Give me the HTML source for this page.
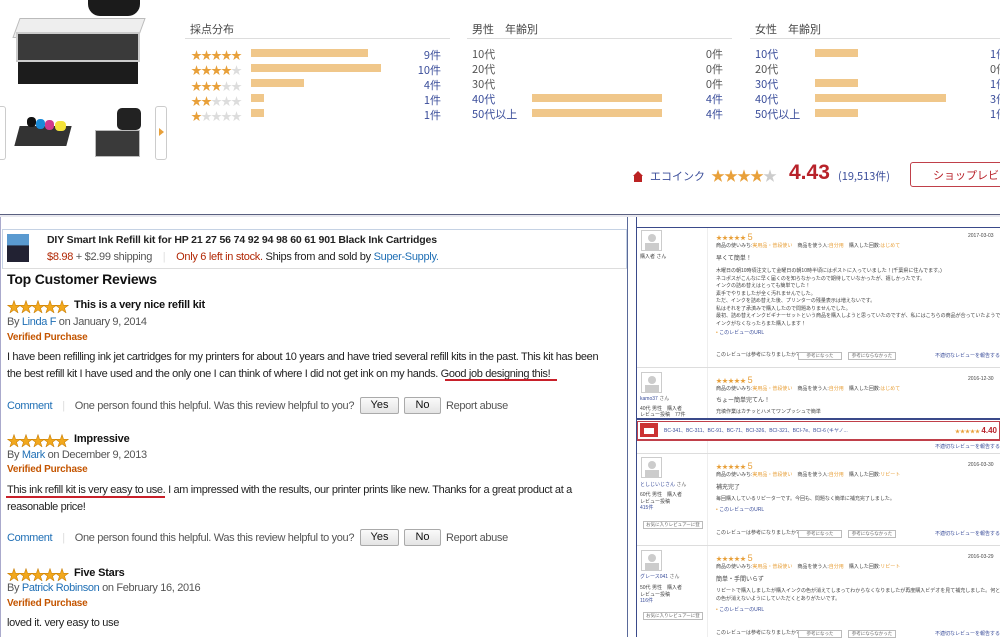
<!DOCTYPE html>
<html><head><meta charset="utf-8">
<style>
*{margin:0;padding:0;box-sizing:border-box}
body{width:1000px;height:637px;overflow:hidden;background:#fff;position:relative;font-family:"Liberation Sans","Noto Sans CJK JP",sans-serif;color:#333}
.a{position:absolute;white-space:nowrap}
.jp{font-family:"Noto Sans CJK JP",sans-serif}
.bar{position:absolute;height:8px;background:#f0c78a}
.cnt{position:absolute;font-size:11px;color:#3a4d9a;text-align:right;width:40px}
.st{position:absolute;font-size:11px;letter-spacing:-1px;color:#e8a03a}
.st i{font-style:normal;color:#ddd}
.amz{position:absolute;font-size:14px;color:#f2a81d;letter-spacing:-2px;-webkit-text-stroke:.5px #c57a00}
.t11{font-size:11px;color:#222;letter-spacing:-0.35px}
.bl{color:#1f6fb5}
.vp{font-size:10px;font-weight:bold;color:#c45500;letter-spacing:-0.2px}
.btn{position:absolute;height:17px;border:1px solid #aaa;border-radius:2px;background:linear-gradient(#fafafa,#e4e4e4);font-size:11px;text-align:center;line-height:15px;color:#111}
.rt{position:absolute;font-size:5px;color:#444;line-height:7.5px;white-space:nowrap}
.av{position:absolute;width:21px;height:21px;border:1px solid #ccc;background:#fff}
.av:before{content:"";position:absolute;left:6px;top:3px;width:8px;height:8px;border-radius:50%;background:#ccc}
.av:after{content:"";position:absolute;left:3px;top:12px;width:14px;height:7px;background:#ccc}
.sb{position:absolute;height:8px;border:1px solid #bbb;font-size:4.5px;text-align:center;line-height:6px;color:#666;overflow:hidden}
</style></head><body>

<!-- top product images -->
<div class="a" style="left:88px;top:0;width:52px;height:16px;background:#1b1b1b;border-radius:0 0 12px 12px"></div>
<div class="a" style="left:16px;top:18px;width:126px;height:20px;border:1px solid #bbb;background:#eee;transform:skewX(-20deg)"></div>
<div class="a" style="left:16px;top:32px;width:124px;height:30px;background:#3a3a3a;border:2px solid #ccc"></div>
<div class="a" style="left:18px;top:62px;width:120px;height:22px;background:#1c1c1c"></div>
<div class="a" style="left:0;top:106px;width:6px;height:54px;border:1px solid #ccc;border-left:none;border-radius:0 3px 3px 0"></div>
<div class="a" style="left:155px;top:106px;width:12px;height:54px;border:1px solid #ccc;border-radius:3px"></div>
<div class="a" style="left:159px;top:128px;width:0;height:0;border-left:5px solid #e8a03a;border-top:4px solid transparent;border-bottom:4px solid transparent"></div>
<div class="a" style="left:17px;top:126px;width:52px;height:20px;background:#333;transform:skewX(-15deg)"></div>
<div class="a" style="left:27px;top:117px;width:9px;height:10px;background:#111;border-radius:4px"></div>
<div class="a" style="left:36px;top:119px;width:9px;height:10px;background:#1a8ad8;border-radius:4px"></div>
<div class="a" style="left:45px;top:120px;width:9px;height:10px;background:#d03a8c;border-radius:4px"></div>
<div class="a" style="left:55px;top:121px;width:11px;height:10px;background:#f4e23a;border-radius:4px"></div>
<div class="a" style="left:117px;top:108px;width:24px;height:22px;background:#222;border-radius:5px"></div>
<div class="a" style="left:95px;top:130px;width:45px;height:27px;background:#3a3a3a;border:1px solid #bbb"></div>

<!-- rating distribution -->
<div class="a jp" style="left:190px;top:21px;font-size:11px;color:#444">採点分布</div>
<div class="a" style="left:185px;top:38px;width:265px;height:1px;background:#ddd"></div>
<div class="st" style="left:191px;top:47px">★★★★★</div>
<div class="st" style="left:191px;top:62px">★★★★<i>★</i></div>
<div class="st" style="left:191px;top:78px">★★★<i>★★</i></div>
<div class="st" style="left:191px;top:93px">★★<i>★★★</i></div>
<div class="st" style="left:191px;top:108px">★<i>★★★★</i></div>
<div class="bar" style="left:251px;top:49px;width:117px"></div>
<div class="bar" style="left:251px;top:64px;width:130px"></div>
<div class="bar" style="left:251px;top:79px;width:53px"></div>
<div class="bar" style="left:251px;top:94px;width:13px"></div>
<div class="bar" style="left:251px;top:109px;width:13px"></div>
<div class="cnt jp" style="left:401px;top:47px">9件</div>
<div class="cnt jp" style="left:401px;top:62px">10件</div>
<div class="cnt jp" style="left:401px;top:77px">4件</div>
<div class="cnt jp" style="left:401px;top:92px">1件</div>
<div class="cnt jp" style="left:401px;top:107px">1件</div>

<div class="a jp" style="left:472px;top:21px;font-size:11px;color:#444">男性　年齢別</div>
<div class="a" style="left:467px;top:38px;width:265px;height:1px;background:#ddd"></div>
<div class="a jp" style="left:472px;top:47px;font-size:11px;line-height:15px;color:#555">10代<br>20代<br>30代<br><span style="color:#3a4d9a">40代<br>50代以上</span></div>
<div class="bar" style="left:532px;top:94px;width:130px"></div>
<div class="bar" style="left:532px;top:109px;width:130px"></div>
<div class="a jp" style="left:683px;top:47px;width:40px;text-align:right;font-size:11px;line-height:15px;color:#555">0件<br>0件<br>0件<br><span style="color:#3a4d9a">4件<br>4件</span></div>

<div class="a jp" style="left:755px;top:21px;font-size:11px;color:#444">女性　年齢別</div>
<div class="a" style="left:750px;top:38px;width:250px;height:1px;background:#ddd"></div>
<div class="a jp" style="left:755px;top:47px;font-size:11px;line-height:15px;color:#3a4d9a">10代<br><span style="color:#555">20代</span><br>30代<br>40代<br>50代以上</div>
<div class="bar" style="left:815px;top:49px;width:43px"></div>
<div class="bar" style="left:815px;top:79px;width:43px"></div>
<div class="bar" style="left:815px;top:94px;width:131px"></div>
<div class="bar" style="left:815px;top:109px;width:43px"></div>
<div class="a jp" style="left:990px;top:47px;font-size:11px;line-height:15px;color:#3a4d9a">1件<br><span style="color:#555">0件</span><br>1件<br>3件<br>1件</div>

<!-- shop -->
<div class="a" style="left:633px;top:171px;width:0;height:0;border-left:5px solid transparent;border-right:5px solid transparent;border-bottom:5px solid #b22"></div>
<div class="a" style="left:634px;top:176px;width:8px;height:6px;background:#b22"></div>
<div class="a jp" style="left:650px;top:168px;font-size:11px;color:#3a4d9a">エコインク</div>
<div class="a" style="left:711px;top:166px;font-size:14px;color:#e8a03a;letter-spacing:-1px">★★★★<span style="color:#ccc">★</span></div>
<div class="a" style="left:789px;top:161px;font-size:21px;font-weight:bold;color:#b8222a">4.43</div>
<div class="a jp" style="left:838px;top:168px;font-size:11px;color:#3a4d9a">(19,513件)</div>
<div class="a jp" style="left:910px;top:162px;width:100px;height:25px;border:1px solid #c0404a;border-radius:3px;font-size:11px;color:#b8222a;padding:4px 0 0 22px">ショップレビュー</div>

<!-- divider -->
<div class="a" style="left:0;top:214px;width:1000px;height:3px;background:#e8e8ee;border-top:1px solid #5a6080"></div>

<!-- LEFT amazon panel -->
<div class="a" style="left:0;top:217px;width:628px;height:420px;border-right:1px solid #5a6a9a;border-left:1px solid #aac"></div>
<div class="a" style="left:2px;top:229px;width:625px;height:40px;border:1px solid #c5d2e4;border-bottom-color:#ddd;background:#fff"></div>
<div class="a" style="left:7px;top:234px;width:22px;height:28px;background:linear-gradient(#5a9ad0 40%,#223 41%)"></div>
<div class="a" style="left:47px;top:234px;font-size:10.5px;font-weight:bold;color:#222;letter-spacing:-0.15px">DIY Smart Ink Refill kit for HP 21 27 56 74 92 94 98 60 61 901 Black Ink Cartridges</div>
<div class="a" style="left:47px;top:251px;font-size:11px;color:#555;letter-spacing:-0.3px"><span style="color:#b12704">$8.98</span> + $2.99 shipping <span style="color:#ddd;margin:0 8px">|</span> <span style="color:#b12704">Only 6 left in stock.</span> <span style="color:#222">Ships from and sold by</span> <span class="bl">Super-Supply.</span></div>
<div class="a" style="left:7px;top:271px;font-size:14px;font-weight:bold;color:#111;letter-spacing:-0.2px">Top Customer Reviews</div>

<div class="amz" style="left:7px;top:297px">★★★★★</div>
<div class="a" style="left:74px;top:299px;font-size:11px;font-weight:bold;color:#111;letter-spacing:-0.2px">This is a very nice refill kit</div>
<div class="a t11" style="left:7px;top:316px;color:#555">By <span class="bl">Linda F</span> on January 9, 2014</div>
<div class="a vp" style="left:7px;top:332px">Verified Purchase</div>
<div class="a t11" style="left:7px;top:349px;line-height:17px">I have been refilling ink jet cartridges for my printers for about 10 years and have tried several refill kits in the past. This kit has been<br>the best refill kit I have used and the only one I can think of where I did not get ink on my hands. Good job designing this!</div>
<div class="a" style="left:445px;top:379px;width:112px;height:2px;background:#c8202a"></div>
<div class="a t11" style="left:7px;top:400px;color:#555"><span class="bl">Comment</span><span style="color:#ddd;margin:0 10px">|</span>One person found this helpful. Was this review helpful to you?</div>
<div class="btn" style="left:360px;top:397px;width:39px">Yes</div>
<div class="btn" style="left:404px;top:397px;width:37px">No</div>
<div class="a t11" style="left:446px;top:400px;color:#555">Report abuse</div>

<div class="amz" style="left:7px;top:431px">★★★★★</div>
<div class="a" style="left:74px;top:433px;font-size:11px;font-weight:bold;color:#111;letter-spacing:-0.2px">Impressive</div>
<div class="a t11" style="left:7px;top:449px;color:#555">By <span class="bl">Mark</span> on December 9, 2013</div>
<div class="a vp" style="left:7px;top:464px">Verified Purchase</div>
<div class="a t11" style="left:7px;top:482px;line-height:17px">This ink refill kit is very easy to use. I am impressed with the results, our printer prints like new. Thanks for a great product at a<br>reasonable price!</div>
<div class="a" style="left:6px;top:496px;width:159px;height:2px;background:#c8202a"></div>
<div class="a t11" style="left:7px;top:532px;color:#555"><span class="bl">Comment</span><span style="color:#ddd;margin:0 10px">|</span>One person found this helpful. Was this review helpful to you?</div>
<div class="btn" style="left:360px;top:529px;width:39px">Yes</div>
<div class="btn" style="left:404px;top:529px;width:37px">No</div>
<div class="a t11" style="left:446px;top:532px;color:#555">Report abuse</div>

<div class="amz" style="left:7px;top:565px">★★★★★</div>
<div class="a" style="left:74px;top:567px;font-size:11px;font-weight:bold;color:#111;letter-spacing:-0.2px">Five Stars</div>
<div class="a t11" style="left:7px;top:582px;color:#555">By <span class="bl">Patrick Robinson</span> on February 16, 2016</div>
<div class="a vp" style="left:7px;top:598px">Verified Purchase</div>
<div class="a t11" style="left:7px;top:617px">loved it. very easy to use</div>

<!-- RIGHT rakuten panel -->
<div class="a" style="left:636px;top:217px;width:364px;height:420px;border-left:1px solid #3a4a8a"></div>
<div class="a" style="left:637px;top:227px;width:363px;height:1px;background:#3a4a8a"></div>
<div class="a" style="left:707px;top:228px;width:1px;height:190px;background:#eee"></div>
<div class="av" style="left:641px;top:230px"></div>
<div class="rt" style="left:640px;top:254px">購入者 さん</div>
<div class="a" style="left:716px;top:232px;font-size:6px;color:#e8a03a">★★★★★ <span style="font-size:9px">5</span></div>
<div class="rt" style="left:968px;top:233px">2017-03-03</div>
<div class="rt" style="left:716px;top:243px">商品の使いみち:<span style="color:#e8a03a">実用品・普段使い</span>　商品を使う人:<span style="color:#e8a03a">自分用</span>　購入した回数:<span style="color:#e8a03a">はじめて</span></div>
<div class="rt" style="left:716px;top:256px;font-size:6px">早くて簡単！</div>
<div class="rt" style="left:716px;top:268px">木曜日の朝10時頃注文して金曜日の朝10時半頃にはポストに入っていました！(千葉県に住んでます。)<br>ネコポスがこんなに早く届くのを知らなかったので期待していなかったが、嬉しかったです。<br>インクの詰め替えはとっても簡単でした！<br>素手でやりましたが全く汚れませんでした。<br>ただ、インクを詰め替えた後、プリンターの残量表示は増えないです。<br>私はそれを了承済みで購入したので問題ありませんでした。<br>最初、詰め替えインクビギナーセットという商品を購入しようと思っていたのですが、私にはこちらの商品が合っていたようです。<br>インクがなくなったらまた購入します！</div>
<div class="rt" style="left:716px;top:330px;color:#3a4d9a"><span style="color:#e8a03a">•</span> このレビューのURL</div>
<div class="rt" style="left:716px;top:352px">このレビューは参考になりましたか?</div>
<div class="sb" style="left:798px;top:352px;width:44px">参考になった</div>
<div class="sb" style="left:848px;top:352px;width:48px">参考にならなかった</div>
<div class="rt" style="left:935px;top:353px;color:#3a4d9a">不適切なレビューを報告する</div>
<div class="a" style="left:637px;top:367px;width:363px;height:1px;background:#ddd"></div>
<div class="av" style="left:641px;top:372px"></div>
<div class="rt" style="left:640px;top:396px;color:#3a4d9a">kamo37 <span style="color:#666">さん</span></div>
<div class="rt" style="left:640px;top:406px;line-height:6px">40代 男性　購入者<br>レビュー投稿　77件</div>
<div class="a" style="left:716px;top:375px;font-size:6px;color:#e8a03a">★★★★★ <span style="font-size:9px">5</span></div>
<div class="rt" style="left:968px;top:376px">2016-12-30</div>
<div class="rt" style="left:716px;top:386px">商品の使いみち:<span style="color:#e8a03a">実用品・普段使い</span>　商品を使う人:<span style="color:#e8a03a">自分用</span>　購入した回数:<span style="color:#e8a03a">はじめて</span></div>
<div class="rt" style="left:716px;top:398px;font-size:6px">ちょー簡単完てん！</div>
<div class="rt" style="left:716px;top:409px">充填作業はカチッとハメてワンプッシュで簡単</div>

<div class="a" style="left:637px;top:418px;width:363px;height:2px;background:#3a4a8a"></div>
<div class="a" style="left:637px;top:421px;width:363px;height:20px;background:#fff;border:1px solid #c0404a;border-bottom:2px solid #c0404a"></div>
<div class="a" style="left:640px;top:423px;width:18px;height:14px;background:#c33"></div>
<div class="a" style="left:644px;top:428px;width:10px;height:6px;background:#fff"></div>
<div class="rt" style="left:664px;top:428px;color:#3a4d9a">BC-341、BC-311、BC-91、BC-71、BCI-326、BCI-321、BCI-7e、BCI-6 (キヤノ...</div>
<div class="a" style="left:955px;top:426px;font-size:5px;color:#e8a03a">★★★★★ <span style="font-size:8px;color:#b8222a;font-weight:bold">4.40</span></div>
<div class="rt" style="left:935px;top:444px;color:#3a4d9a">不適切なレビューを報告する</div>
<div class="a" style="left:707px;top:441px;width:1px;height:196px;background:#eee"></div>
<div class="a" style="left:637px;top:453px;width:363px;height:1px;background:#ddd"></div>

<div class="av" style="left:641px;top:457px"></div>
<div class="rt" style="left:640px;top:482px;color:#3a4d9a">としじいじさん <span style="color:#666">さん</span></div>
<div class="rt" style="left:640px;top:492px;line-height:6.5px">60代 男性　購入者<br>レビュー投稿<br><span style="color:#3a4d9a">415件</span></div>
<div class="sb" style="left:643px;top:521px;width:60px">お気に入りレビュアーに登録</div>
<div class="a" style="left:716px;top:461px;font-size:6px;color:#e8a03a">★★★★★ <span style="font-size:9px">5</span></div>
<div class="rt" style="left:968px;top:462px">2016-03-30</div>
<div class="rt" style="left:716px;top:472px">商品の使いみち:<span style="color:#e8a03a">実用品・普段使い</span>　商品を使う人:<span style="color:#e8a03a">自分用</span>　購入した回数:<span style="color:#e8a03a">リピート</span></div>
<div class="rt" style="left:716px;top:485px;font-size:6px">補充完了</div>
<div class="rt" style="left:716px;top:496px">毎回購入しているリピーターです。今回も、問題なく簡単に補充完了しました。</div>
<div class="rt" style="left:716px;top:507px;color:#3a4d9a"><span style="color:#e8a03a">•</span> このレビューのURL</div>
<div class="rt" style="left:716px;top:530px">このレビューは参考になりましたか?</div>
<div class="sb" style="left:798px;top:530px;width:44px">参考になった</div>
<div class="sb" style="left:848px;top:530px;width:48px">参考にならなかった</div>
<div class="rt" style="left:935px;top:531px;color:#3a4d9a">不適切なレビューを報告する</div>
<div class="a" style="left:637px;top:545px;width:363px;height:1px;background:#ddd"></div>

<div class="av" style="left:641px;top:550px"></div>
<div class="rt" style="left:640px;top:574px;color:#3a4d9a">グレース041 <span style="color:#666">さん</span></div>
<div class="rt" style="left:640px;top:585px;line-height:6.5px">50代 男性　購入者<br>レビュー投稿<br><span style="color:#3a4d9a">116件</span></div>
<div class="sb" style="left:643px;top:612px;width:60px">お気に入りレビュアーに登録</div>
<div class="a" style="left:716px;top:553px;font-size:6px;color:#e8a03a">★★★★★ <span style="font-size:9px">5</span></div>
<div class="rt" style="left:968px;top:554px">2016-03-29</div>
<div class="rt" style="left:716px;top:564px">商品の使いみち:<span style="color:#e8a03a">実用品・普段使い</span>　商品を使う人:<span style="color:#e8a03a">自分用</span>　購入した回数:<span style="color:#e8a03a">リピート</span></div>
<div class="rt" style="left:716px;top:577px;font-size:6px">簡単・手間いらず</div>
<div class="rt" style="left:716px;top:588px">リピートで購入しましたが購入インクの色が消えてしまってわからなくなりましたが再度購入ビデオを見て補充しました。何とか購入<br>の色が消えないようにしていただくとありがたいです。</div>
<div class="rt" style="left:716px;top:607px;color:#3a4d9a"><span style="color:#e8a03a">•</span> このレビューのURL</div>
<div class="rt" style="left:716px;top:630px">このレビューは参考になりましたか?</div>
<div class="sb" style="left:798px;top:630px;width:44px">参考になった</div>
<div class="sb" style="left:848px;top:630px;width:48px">参考にならなかった</div>
<div class="rt" style="left:935px;top:631px;color:#3a4d9a">不適切なレビューを報告する</div>
</body></html>
